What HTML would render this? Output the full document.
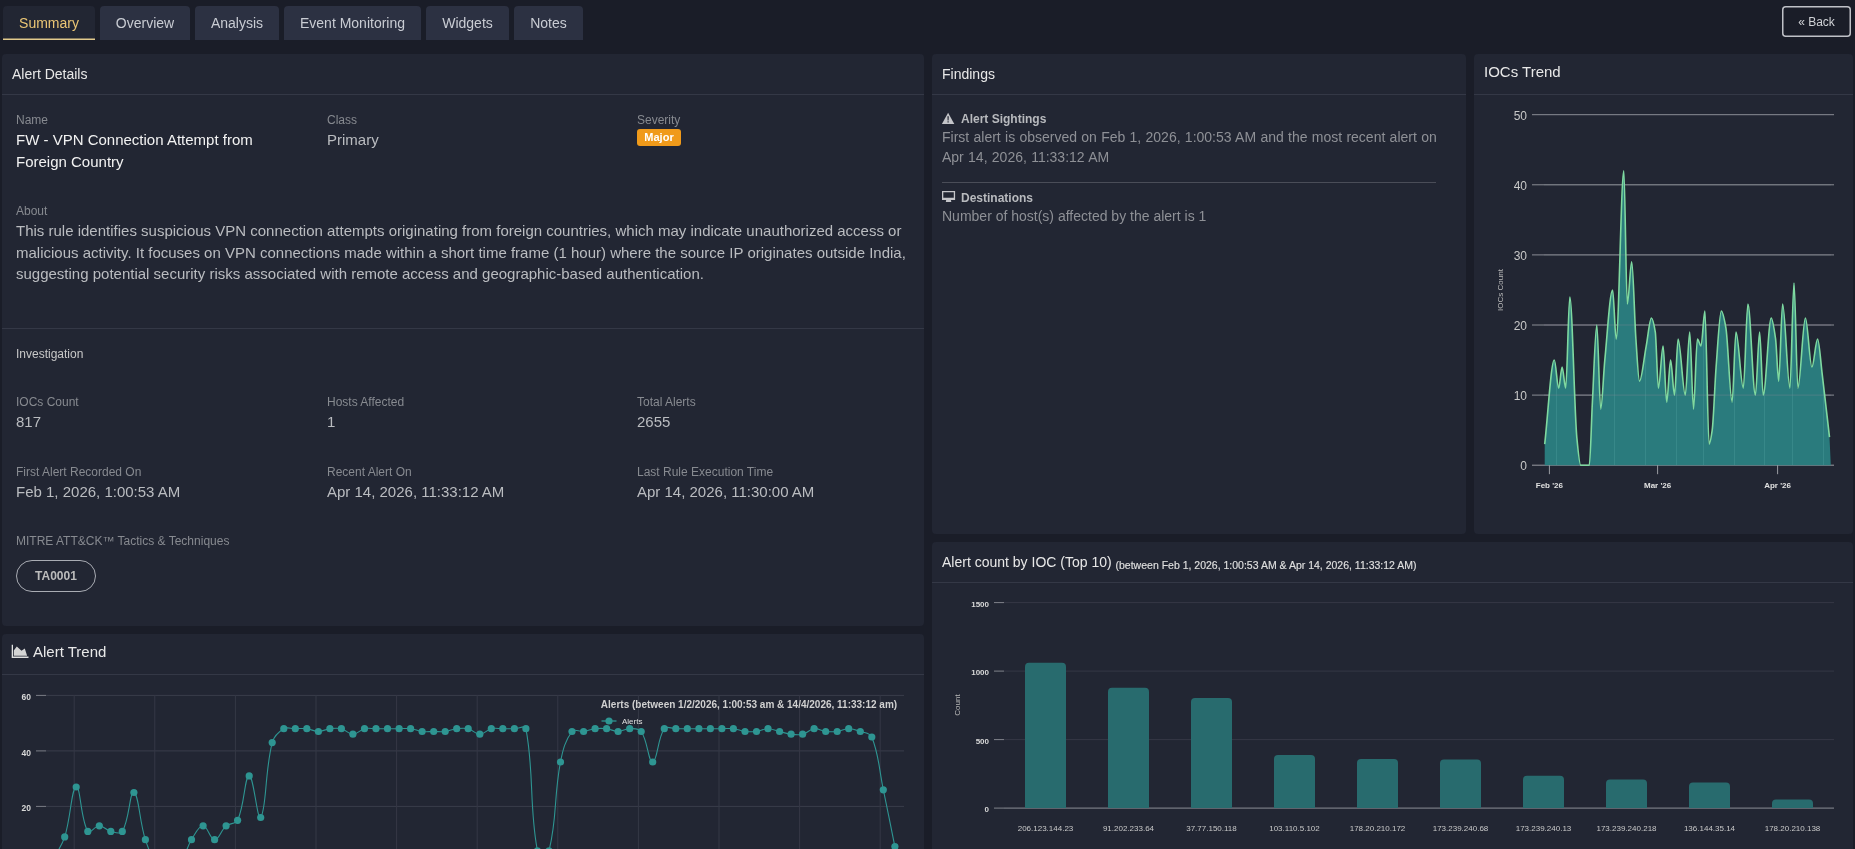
<!DOCTYPE html>
<html><head><meta charset="utf-8"><style>
*{box-sizing:border-box;margin:0;padding:0}
html,body{width:1855px;height:849px;overflow:hidden;background:#1a1d28;font-family:"Liberation Sans",sans-serif;color:#c8c8c8}
.abs{position:absolute}
body>div{will-change:transform}
.tab{position:absolute;top:6px;height:34px;background:#2c3142;border-radius:4px 4px 0 0;color:#c9ccd3;font-size:14px;line-height:34px;text-align:center}
.tab.active{background:#222633;color:#ebc675;line-height:35px}
.panel{position:absolute;background:#222633;border-radius:4px}
.ph{position:absolute;left:0;right:0;top:0;height:41px;border-bottom:1px solid #343846}
.ph span{position:absolute;left:10px;top:12px;font-size:14px;color:#e8e8e8;white-space:nowrap}
.lbl{position:absolute;font-size:12px;color:#878a90;white-space:nowrap}
.val{position:absolute;font-size:15px;color:#babcc0;white-space:nowrap}
svg text{font-family:"Liberation Sans",sans-serif}
</style></head><body>
<div class="tab active" style="left:3px;width:92px">Summary</div>
<svg class="abs" style="left:0;top:30px" width="100" height="15"><line x1="3" y1="9.3" x2="95" y2="9.3" stroke="#e2ca8c" stroke-width="1.6"/></svg>
<div class="tab" style="left:100px;width:90px">Overview</div>
<div class="tab" style="left:195px;width:84px">Analysis</div>
<div class="tab" style="left:284px;width:137px">Event Monitoring</div>
<div class="tab" style="left:426px;width:83px">Widgets</div>
<div class="tab" style="left:514px;width:69px">Notes</div>
<svg class="abs" style="left:1780px;top:4px" width="74" height="36"><rect x="2.75" y="2.75" width="67.5" height="29.5" rx="3" fill="none" stroke="#bfc1c7" stroke-width="1.5"/></svg><div class="abs" style="left:1782px;top:8px;width:69px;height:31px;color:#d0d2d6;font-size:12px;line-height:29px;text-align:center">&laquo; Back</div>

<!-- Alert details -->
<div class="panel" style="left:2px;top:54px;width:922px;height:572px">
  <div class="ph"><span>Alert Details</span></div>
  <div class="lbl" style="left:14px;top:59px">Name</div>
  <div class="val" style="left:14px;top:75px;color:#f2f2f2;line-height:21.6px;white-space:normal;width:290px">FW - VPN Connection Attempt from Foreign Country</div>
  <div class="lbl" style="left:325px;top:59px">Class</div>
  <div class="val" style="left:325px;top:74.5px;line-height:22px">Primary</div>
  <div class="lbl" style="left:635px;top:59px">Severity</div>
  <div class="abs" style="left:635px;top:75px;width:44px;height:17px;background:#f09a1a;border-radius:3px;color:#fff;font-size:11px;font-weight:700;text-align:center;line-height:17px">Major</div>
  <div class="lbl" style="left:14px;top:150px">About</div>
  <div class="val" style="left:14px;top:166px;width:900px;white-space:normal;line-height:21.5px">This rule identifies suspicious VPN connection attempts originating from foreign countries, which may indicate unauthorized access or malicious activity. It focuses on VPN connections made within a short time frame (1 hour) where the source IP originates outside India, suggesting potential security risks associated with remote access and geographic-based authentication.</div>
  <div class="abs" style="left:0;right:0;top:274px;border-top:1px solid #343846"></div>
  <div class="lbl" style="left:14px;top:293px;color:#c8c8c8">Investigation</div>
  <div class="lbl" style="left:14px;top:341px">IOCs Count</div>
  <div class="val" style="left:14px;top:359px">817</div>
  <div class="lbl" style="left:325px;top:341px">Hosts Affected</div>
  <div class="val" style="left:325px;top:359px">1</div>
  <div class="lbl" style="left:635px;top:341px">Total Alerts</div>
  <div class="val" style="left:635px;top:359px">2655</div>
  <div class="lbl" style="left:14px;top:411px">First Alert Recorded On</div>
  <div class="val" style="left:14px;top:429px">Feb 1, 2026, 1:00:53 AM</div>
  <div class="lbl" style="left:325px;top:411px">Recent Alert On</div>
  <div class="val" style="left:325px;top:429px">Apr 14, 2026, 11:33:12 AM</div>
  <div class="lbl" style="left:635px;top:411px">Last Rule Execution Time</div>
  <div class="val" style="left:635px;top:429px">Apr 14, 2026, 11:30:00 AM</div>
  <div class="lbl" style="left:14px;top:480px">MITRE ATT&amp;CK&trade; Tactics &amp; Techniques</div>
  <div class="abs" style="left:14px;top:506px;width:80px;height:32px;border:1px solid #a9acb3;border-radius:16px;font-size:12px;font-weight:700;color:#bcbcbc;text-align:center;line-height:30px">TA0001</div>
</div>

<!-- Alert trend -->
<div class="panel" style="left:2px;top:634px;width:922px;height:260px">
  <div class="ph"><span style="font-size:15px;top:9px;left:31px">Alert Trend</span></div>
  <svg class="abs" style="left:-0.8px;top:0" width="40" height="40"><path d="M10.7,10.8 H12 V22.6 H27.5 V23.9 H10.7 Z" fill="#e0e0e0"/><path d="M12.8,21.8 V16.6 L15.8,12.4 L20.5,16.8 L23.8,14.5 L26.1,21.8 Z" fill="#d4d4d4"/></svg>
</div>

<!-- Findings -->
<div class="panel" style="left:932px;top:54px;width:534px;height:480px">
  <div class="ph"><span>Findings</span></div>
  <div class="abs" style="left:10px;top:57.5px;font-size:12px;font-weight:700;color:#b8babe;white-space:nowrap"><span style="display:inline-block;width:19px"></span>Alert Sightings</div>
  <svg class="abs" style="left:0;top:50px" width="40" height="30"><path d="M16.1,8.7 L22.3,20 H9.9 Z" fill="#c4c5c9"/><path d="M15.4,12.3 H16.8 L16.6,16.6 H15.6 Z M15.5,17.3 H16.7 V18.5 H15.5 Z" fill="#222633"/></svg>
  <div class="abs" style="left:10px;top:73px;width:500px;font-size:14px;line-height:20px;color:#8e9096;word-spacing:0.4px">First alert is observed on Feb 1, 2026, 1:00:53 AM and the most recent alert on Apr 14, 2026, 11:33:12 AM</div>
  <div class="abs" style="left:10px;top:128px;width:494px;border-top:1px solid #4a4d58"></div>
  <div class="abs" style="left:10px;top:136.5px;font-size:12px;font-weight:700;color:#b8babe;white-space:nowrap"><span style="display:inline-block;width:19px"></span>Destinations</div>
  <svg class="abs" style="left:0;top:130px" width="40" height="30"><path d="M10,6.9 H23.1 V16.1 H10 Z M11.3,8.2 V13.7 H21.8 V8.2 Z" fill="#c4c5c9" fill-rule="evenodd"/><path d="M14.2,16 H18.9 L19.3,18.1 H13.8 Z" fill="#c4c5c9"/></svg>
  <div class="abs" style="left:10px;top:152px;width:500px;font-size:14px;line-height:20px;color:#8e9096">Number of host(s) affected by the alert is 1</div>
</div>

<!-- IOCs Trend -->
<div class="panel" style="left:1474px;top:54px;width:379px;height:480px">
  <div class="ph"><span style="font-size:15px;top:9px">IOCs Trend</span></div>
</div>

<!-- Alert count by IOC -->
<div class="panel" style="left:932px;top:542px;width:921px;height:340px">
  <div class="ph"><span>Alert count by IOC (Top 10) <b style="font-size:10.5px;font-weight:400;-webkit-text-stroke:0.15px #dcdcdc;color:#e0e0e0;position:relative;top:2px">(between Feb 1, 2026, 1:00:53 AM &amp; Apr 14, 2026, 11:33:12 AM)</b></span></div>
</div>

<svg class="abs" style="left:0;top:0" width="1855" height="849" viewBox="0 0 1855 849">
<line x1="36" y1="806.4" x2="46" y2="806.4" stroke="#7a7d86" stroke-width="1"/>
<line x1="46" y1="806.4" x2="904" y2="806.4" stroke="#3a3d4a" stroke-width="1"/>
<text x="31" y="811.4" text-anchor="end" font-size="8.5" font-weight="700" fill="#d8d8d8">20</text>
<line x1="36" y1="750.9" x2="46" y2="750.9" stroke="#7a7d86" stroke-width="1"/>
<line x1="46" y1="750.9" x2="904" y2="750.9" stroke="#3a3d4a" stroke-width="1"/>
<text x="31" y="755.9" text-anchor="end" font-size="8.5" font-weight="700" fill="#d8d8d8">40</text>
<line x1="36" y1="695.4" x2="46" y2="695.4" stroke="#7a7d86" stroke-width="1"/>
<line x1="46" y1="695.4" x2="904" y2="695.4" stroke="#3a3d4a" stroke-width="1"/>
<text x="31" y="700.4" text-anchor="end" font-size="8.5" font-weight="700" fill="#d8d8d8">60</text>
<line x1="74.2" y1="695" x2="74.2" y2="849" stroke="#353846" stroke-width="1"/>
<line x1="154.8" y1="695" x2="154.8" y2="849" stroke="#353846" stroke-width="1"/>
<line x1="235.4" y1="695" x2="235.4" y2="849" stroke="#353846" stroke-width="1"/>
<line x1="316.0" y1="695" x2="316.0" y2="849" stroke="#353846" stroke-width="1"/>
<line x1="396.6" y1="695" x2="396.6" y2="849" stroke="#353846" stroke-width="1"/>
<line x1="477.2" y1="695" x2="477.2" y2="849" stroke="#353846" stroke-width="1"/>
<line x1="557.8" y1="695" x2="557.8" y2="849" stroke="#353846" stroke-width="1"/>
<line x1="638.4" y1="695" x2="638.4" y2="849" stroke="#353846" stroke-width="1"/>
<line x1="719.0" y1="695" x2="719.0" y2="849" stroke="#353846" stroke-width="1"/>
<line x1="799.6" y1="695" x2="799.6" y2="849" stroke="#353846" stroke-width="1"/>
<line x1="880.2" y1="695" x2="880.2" y2="849" stroke="#353846" stroke-width="1"/>
<path d="M53.17,859.12 C57.78,850.25 61.68,846.39 64.70,836.92 C70.90,817.53 71.36,788.15 76.23,786.98 C80.59,785.93 80.55,819.22 87.76,831.38 C89.77,834.76 94.68,825.82 99.29,825.82 C103.90,825.82 105.97,830.21 110.82,831.38 C115.19,832.43 120.31,834.82 122.35,831.38 C129.53,819.28 129.68,791.01 133.88,792.52 C138.91,794.34 139.32,821.38 145.41,839.70 C148.55,849.13 150.63,855.82 156.94,861.90 C159.85,864.70 163.86,861.90 168.47,861.90 C173.08,861.90 177.09,864.70 180.00,861.90 C186.31,855.82 186.17,848.08 191.53,839.70 C195.39,833.65 198.45,825.82 203.06,825.82 C207.67,825.82 209.98,839.70 214.59,839.70 C219.20,839.70 220.72,830.37 226.12,825.82 C229.95,822.60 235.64,824.63 237.65,820.27 C244.86,804.65 244.43,776.45 249.18,775.88 C253.65,775.34 257.36,822.33 260.71,817.50 C266.59,809.01 264.79,771.27 272.24,742.57 C274.01,735.75 278.14,732.09 283.77,728.70 C287.37,726.54 290.69,728.70 295.30,728.70 C299.91,728.70 302.28,728.15 306.83,728.70 C311.51,729.26 313.75,731.48 318.36,731.48 C322.97,731.48 325.21,729.26 329.89,728.70 C334.44,728.15 337.05,727.65 341.42,728.70 C346.27,729.87 348.34,734.25 352.95,734.25 C357.56,734.25 359.63,729.87 364.48,728.70 C368.85,727.65 371.40,728.70 376.01,728.70 C380.62,728.70 382.93,728.70 387.54,728.70 C392.15,728.70 394.46,728.70 399.07,728.70 C403.68,728.70 406.05,728.15 410.60,728.70 C415.28,729.26 417.45,730.91 422.13,731.48 C426.68,732.02 429.05,731.48 433.66,731.48 C438.27,731.48 440.64,732.02 445.19,731.48 C449.87,730.91 452.04,729.26 456.72,728.70 C461.27,728.15 463.88,727.65 468.25,728.70 C473.10,729.87 475.17,734.25 479.78,734.25 C484.39,734.25 486.46,729.87 491.31,728.70 C495.68,727.65 498.23,728.70 502.84,728.70 C507.45,728.70 509.76,728.70 514.37,728.70 C518.98,728.70 525.11,724.50 525.90,728.70 C534.33,773.34 529.00,806.16 537.43,850.80 C538.22,855.00 547.91,854.85 548.96,850.80 C557.13,819.33 553.73,796.98 560.49,762.00 C562.95,749.25 565.20,740.50 572.02,731.48 C574.43,728.29 579.00,732.02 583.55,731.48 C588.23,730.91 590.40,729.26 595.08,728.70 C599.63,728.15 602.06,728.15 606.61,728.70 C611.29,729.26 613.53,731.48 618.14,731.48 C622.75,731.48 625.06,728.70 629.67,728.70 C634.28,728.70 638.74,727.92 641.20,731.48 C647.97,741.24 648.30,762.53 652.73,762.00 C657.52,761.42 657.31,738.74 664.26,728.70 C666.53,725.42 671.18,728.70 675.79,728.70 C680.40,728.70 682.71,728.70 687.32,728.70 C691.93,728.70 694.24,728.70 698.85,728.70 C703.46,728.70 705.77,728.70 710.38,728.70 C714.99,728.70 717.30,728.70 721.91,728.70 C726.52,728.70 728.89,728.15 733.44,728.70 C738.12,729.26 740.29,730.91 744.97,731.48 C749.52,732.02 751.95,732.02 756.50,731.48 C761.18,730.91 763.42,728.70 768.03,728.70 C772.64,728.70 774.95,730.37 779.56,731.48 C784.17,732.59 786.41,733.69 791.09,734.25 C795.64,734.80 798.25,735.30 802.62,734.25 C807.47,733.08 809.36,729.28 814.15,728.70 C818.59,728.17 821.00,730.91 825.68,731.48 C830.23,732.02 832.66,732.02 837.21,731.48 C841.89,730.91 844.13,728.70 848.74,728.70 C853.35,728.70 855.83,729.87 860.27,731.48 C865.06,733.20 870.03,732.56 871.80,737.02 C879.26,755.87 878.89,768.62 883.33,789.75 C888.11,812.47 890.25,823.88 894.86,846.64" fill="none" stroke="#2e9592" stroke-width="1.1"/>
<circle cx="53.2" cy="859.1" r="3.6" fill="#2e9592"/>
<circle cx="64.7" cy="836.9" r="3.6" fill="#2e9592"/>
<circle cx="76.2" cy="787.0" r="3.6" fill="#2e9592"/>
<circle cx="87.8" cy="831.4" r="3.6" fill="#2e9592"/>
<circle cx="99.3" cy="825.8" r="3.6" fill="#2e9592"/>
<circle cx="110.8" cy="831.4" r="3.6" fill="#2e9592"/>
<circle cx="122.3" cy="831.4" r="3.6" fill="#2e9592"/>
<circle cx="133.9" cy="792.5" r="3.6" fill="#2e9592"/>
<circle cx="145.4" cy="839.7" r="3.6" fill="#2e9592"/>
<circle cx="156.9" cy="861.9" r="3.6" fill="#2e9592"/>
<circle cx="168.5" cy="861.9" r="3.6" fill="#2e9592"/>
<circle cx="180.0" cy="861.9" r="3.6" fill="#2e9592"/>
<circle cx="191.5" cy="839.7" r="3.6" fill="#2e9592"/>
<circle cx="203.1" cy="825.8" r="3.6" fill="#2e9592"/>
<circle cx="214.6" cy="839.7" r="3.6" fill="#2e9592"/>
<circle cx="226.1" cy="825.8" r="3.6" fill="#2e9592"/>
<circle cx="237.6" cy="820.3" r="3.6" fill="#2e9592"/>
<circle cx="249.2" cy="775.9" r="3.6" fill="#2e9592"/>
<circle cx="260.7" cy="817.5" r="3.6" fill="#2e9592"/>
<circle cx="272.2" cy="742.6" r="3.6" fill="#2e9592"/>
<circle cx="283.8" cy="728.7" r="3.6" fill="#2e9592"/>
<circle cx="295.3" cy="728.7" r="3.6" fill="#2e9592"/>
<circle cx="306.8" cy="728.7" r="3.6" fill="#2e9592"/>
<circle cx="318.4" cy="731.5" r="3.6" fill="#2e9592"/>
<circle cx="329.9" cy="728.7" r="3.6" fill="#2e9592"/>
<circle cx="341.4" cy="728.7" r="3.6" fill="#2e9592"/>
<circle cx="352.9" cy="734.2" r="3.6" fill="#2e9592"/>
<circle cx="364.5" cy="728.7" r="3.6" fill="#2e9592"/>
<circle cx="376.0" cy="728.7" r="3.6" fill="#2e9592"/>
<circle cx="387.5" cy="728.7" r="3.6" fill="#2e9592"/>
<circle cx="399.1" cy="728.7" r="3.6" fill="#2e9592"/>
<circle cx="410.6" cy="728.7" r="3.6" fill="#2e9592"/>
<circle cx="422.1" cy="731.5" r="3.6" fill="#2e9592"/>
<circle cx="433.7" cy="731.5" r="3.6" fill="#2e9592"/>
<circle cx="445.2" cy="731.5" r="3.6" fill="#2e9592"/>
<circle cx="456.7" cy="728.7" r="3.6" fill="#2e9592"/>
<circle cx="468.2" cy="728.7" r="3.6" fill="#2e9592"/>
<circle cx="479.8" cy="734.2" r="3.6" fill="#2e9592"/>
<circle cx="491.3" cy="728.7" r="3.6" fill="#2e9592"/>
<circle cx="502.8" cy="728.7" r="3.6" fill="#2e9592"/>
<circle cx="514.4" cy="728.7" r="3.6" fill="#2e9592"/>
<circle cx="525.9" cy="728.7" r="3.6" fill="#2e9592"/>
<circle cx="537.4" cy="850.8" r="3.6" fill="#2e9592"/>
<circle cx="549.0" cy="850.8" r="3.6" fill="#2e9592"/>
<circle cx="560.5" cy="762.0" r="3.6" fill="#2e9592"/>
<circle cx="572.0" cy="731.5" r="3.6" fill="#2e9592"/>
<circle cx="583.6" cy="731.5" r="3.6" fill="#2e9592"/>
<circle cx="595.1" cy="728.7" r="3.6" fill="#2e9592"/>
<circle cx="606.6" cy="728.7" r="3.6" fill="#2e9592"/>
<circle cx="618.1" cy="731.5" r="3.6" fill="#2e9592"/>
<circle cx="629.7" cy="728.7" r="3.6" fill="#2e9592"/>
<circle cx="641.2" cy="731.5" r="3.6" fill="#2e9592"/>
<circle cx="652.7" cy="762.0" r="3.6" fill="#2e9592"/>
<circle cx="664.3" cy="728.7" r="3.6" fill="#2e9592"/>
<circle cx="675.8" cy="728.7" r="3.6" fill="#2e9592"/>
<circle cx="687.3" cy="728.7" r="3.6" fill="#2e9592"/>
<circle cx="698.9" cy="728.7" r="3.6" fill="#2e9592"/>
<circle cx="710.4" cy="728.7" r="3.6" fill="#2e9592"/>
<circle cx="721.9" cy="728.7" r="3.6" fill="#2e9592"/>
<circle cx="733.4" cy="728.7" r="3.6" fill="#2e9592"/>
<circle cx="745.0" cy="731.5" r="3.6" fill="#2e9592"/>
<circle cx="756.5" cy="731.5" r="3.6" fill="#2e9592"/>
<circle cx="768.0" cy="728.7" r="3.6" fill="#2e9592"/>
<circle cx="779.6" cy="731.5" r="3.6" fill="#2e9592"/>
<circle cx="791.1" cy="734.2" r="3.6" fill="#2e9592"/>
<circle cx="802.6" cy="734.2" r="3.6" fill="#2e9592"/>
<circle cx="814.1" cy="728.7" r="3.6" fill="#2e9592"/>
<circle cx="825.7" cy="731.5" r="3.6" fill="#2e9592"/>
<circle cx="837.2" cy="731.5" r="3.6" fill="#2e9592"/>
<circle cx="848.7" cy="728.7" r="3.6" fill="#2e9592"/>
<circle cx="860.3" cy="731.5" r="3.6" fill="#2e9592"/>
<circle cx="871.8" cy="737.0" r="3.6" fill="#2e9592"/>
<circle cx="883.3" cy="789.8" r="3.6" fill="#2e9592"/>
<circle cx="894.9" cy="846.6" r="3.6" fill="#2e9592"/>
<text x="749" y="708" text-anchor="middle" font-size="10" font-weight="700" fill="#d0d0d0">Alerts (between 1/2/2026, 1:00:53 am &amp; 14/4/2026, 11:33:12 am)</text>
<line x1="601.5" y1="721" x2="616.5" y2="721" stroke="#2e9592" stroke-width="1.3"/>
<circle cx="609" cy="721" r="3.6" fill="#2e9592"/>
<text x="622" y="724" font-size="8" fill="#e0e0e0">Alerts</text>
<line x1="1532" y1="465.2" x2="1834" y2="465.2" stroke="#9a9ca3" stroke-width="1"/>
<text x="1527" y="470.2" text-anchor="end" font-size="12" fill="#c8c8c8">0</text>
<line x1="1532" y1="395.1" x2="1834" y2="395.1" stroke="#8a8d95" stroke-width="1"/>
<text x="1527" y="400.1" text-anchor="end" font-size="12" fill="#c8c8c8">10</text>
<line x1="1532" y1="325.0" x2="1834" y2="325.0" stroke="#8a8d95" stroke-width="1"/>
<text x="1527" y="330.0" text-anchor="end" font-size="12" fill="#c8c8c8">20</text>
<line x1="1532" y1="254.9" x2="1834" y2="254.9" stroke="#8a8d95" stroke-width="1"/>
<text x="1527" y="259.9" text-anchor="end" font-size="12" fill="#c8c8c8">30</text>
<line x1="1532" y1="184.8" x2="1834" y2="184.8" stroke="#8a8d95" stroke-width="1"/>
<text x="1527" y="189.8" text-anchor="end" font-size="12" fill="#c8c8c8">40</text>
<line x1="1532" y1="114.7" x2="1834" y2="114.7" stroke="#8a8d95" stroke-width="1"/>
<text x="1527" y="119.7" text-anchor="end" font-size="12" fill="#c8c8c8">50</text>
<clipPath id="iocclip"><path d="M1544.7,444.2 C1547.90,416.13 1551.10,360.05 1554.30,360.05 C1555.77,360.05 1557.23,388.09 1558.70,388.09 C1559.83,388.09 1560.97,367.06 1562.10,367.06 C1563.30,367.06 1564.50,388.09 1565.70,388.09 C1567.07,388.09 1568.43,296.96 1569.80,296.96 C1572.13,296.96 1574.47,412.47 1576.80,437.16 C1578.10,450.92 1579.40,465.20 1580.70,465.20 C1583.57,465.20 1586.43,465.20 1589.30,465.20 C1590.33,465.20 1591.37,421.57 1592.40,402.11 C1593.87,374.49 1595.33,325.00 1596.80,325.00 C1598.10,325.00 1599.40,409.12 1600.70,409.12 C1602.07,409.12 1603.43,374.08 1604.80,360.05 C1607.40,333.36 1610.00,289.95 1612.60,289.95 C1613.80,289.95 1615.00,339.02 1616.20,339.02 C1618.73,339.02 1621.27,170.78 1623.80,170.78 C1624.97,170.78 1626.13,303.97 1627.30,303.97 C1628.77,303.97 1630.23,261.91 1631.70,261.91 C1633.10,261.91 1634.50,319.03 1635.90,339.02 C1637.10,356.16 1638.30,381.08 1639.50,381.08 C1641.73,381.08 1643.97,357.89 1646.20,346.03 C1647.93,336.82 1649.67,317.99 1651.40,317.99 C1652.70,317.99 1654.00,324.21 1655.30,332.01 C1656.33,338.21 1657.37,388.09 1658.40,388.09 C1659.97,388.09 1661.53,346.03 1663.10,346.03 C1664.30,346.03 1665.50,402.11 1666.70,402.11 C1668.00,402.11 1669.30,360.05 1670.60,360.05 C1671.90,360.05 1673.20,395.10 1674.50,395.10 C1675.70,395.10 1676.90,339.02 1678.10,339.02 C1680.50,339.02 1682.90,395.10 1685.30,395.10 C1686.77,395.10 1688.23,332.01 1689.70,332.01 C1690.97,332.01 1692.23,409.12 1693.50,409.12 C1694.80,409.12 1696.10,339.02 1697.40,339.02 C1698.60,339.02 1699.80,346.03 1701.00,346.03 C1702.30,346.03 1703.60,310.98 1704.90,310.98 C1706.30,310.98 1707.70,444.17 1709.10,444.17 C1710.13,444.17 1711.17,437.45 1712.20,430.15 C1713.50,420.96 1714.80,383.88 1716.10,367.06 C1717.83,344.63 1719.57,310.98 1721.30,310.98 C1722.83,310.98 1724.37,319.21 1725.90,327.80 C1727.97,339.39 1730.03,402.11 1732.10,402.11 C1733.40,402.11 1734.70,332.01 1736.00,332.01 C1738.43,332.01 1740.87,388.09 1743.30,388.09 C1744.83,388.09 1746.37,303.97 1747.90,303.97 C1750.40,303.97 1752.90,395.10 1755.40,395.10 C1756.80,395.10 1758.20,332.01 1759.60,332.01 C1760.80,332.01 1762.00,395.10 1763.20,395.10 C1765.87,395.10 1768.53,317.99 1771.20,317.99 C1772.67,317.99 1774.13,328.65 1775.60,339.02 C1776.63,346.32 1777.67,381.08 1778.70,381.08 C1780.00,381.08 1781.30,303.97 1782.60,303.97 C1785.03,303.97 1787.47,388.09 1789.90,388.09 C1791.27,388.09 1792.63,282.94 1794.00,282.94 C1795.30,282.94 1796.60,388.09 1797.90,388.09 C1800.40,388.09 1802.90,317.99 1805.40,317.99 C1807.57,317.99 1809.73,367.06 1811.90,367.06 C1813.80,367.06 1815.70,339.02 1817.60,339.02 C1819.13,339.02 1820.67,361.65 1822.20,374.07 C1824.63,393.78 1827.07,416.13 1829.50,437.16 L1830.8,465.2 L1544.7,465.2 Z"/></clipPath>
<path d="M1544.7,444.2 C1547.90,416.13 1551.10,360.05 1554.30,360.05 C1555.77,360.05 1557.23,388.09 1558.70,388.09 C1559.83,388.09 1560.97,367.06 1562.10,367.06 C1563.30,367.06 1564.50,388.09 1565.70,388.09 C1567.07,388.09 1568.43,296.96 1569.80,296.96 C1572.13,296.96 1574.47,412.47 1576.80,437.16 C1578.10,450.92 1579.40,465.20 1580.70,465.20 C1583.57,465.20 1586.43,465.20 1589.30,465.20 C1590.33,465.20 1591.37,421.57 1592.40,402.11 C1593.87,374.49 1595.33,325.00 1596.80,325.00 C1598.10,325.00 1599.40,409.12 1600.70,409.12 C1602.07,409.12 1603.43,374.08 1604.80,360.05 C1607.40,333.36 1610.00,289.95 1612.60,289.95 C1613.80,289.95 1615.00,339.02 1616.20,339.02 C1618.73,339.02 1621.27,170.78 1623.80,170.78 C1624.97,170.78 1626.13,303.97 1627.30,303.97 C1628.77,303.97 1630.23,261.91 1631.70,261.91 C1633.10,261.91 1634.50,319.03 1635.90,339.02 C1637.10,356.16 1638.30,381.08 1639.50,381.08 C1641.73,381.08 1643.97,357.89 1646.20,346.03 C1647.93,336.82 1649.67,317.99 1651.40,317.99 C1652.70,317.99 1654.00,324.21 1655.30,332.01 C1656.33,338.21 1657.37,388.09 1658.40,388.09 C1659.97,388.09 1661.53,346.03 1663.10,346.03 C1664.30,346.03 1665.50,402.11 1666.70,402.11 C1668.00,402.11 1669.30,360.05 1670.60,360.05 C1671.90,360.05 1673.20,395.10 1674.50,395.10 C1675.70,395.10 1676.90,339.02 1678.10,339.02 C1680.50,339.02 1682.90,395.10 1685.30,395.10 C1686.77,395.10 1688.23,332.01 1689.70,332.01 C1690.97,332.01 1692.23,409.12 1693.50,409.12 C1694.80,409.12 1696.10,339.02 1697.40,339.02 C1698.60,339.02 1699.80,346.03 1701.00,346.03 C1702.30,346.03 1703.60,310.98 1704.90,310.98 C1706.30,310.98 1707.70,444.17 1709.10,444.17 C1710.13,444.17 1711.17,437.45 1712.20,430.15 C1713.50,420.96 1714.80,383.88 1716.10,367.06 C1717.83,344.63 1719.57,310.98 1721.30,310.98 C1722.83,310.98 1724.37,319.21 1725.90,327.80 C1727.97,339.39 1730.03,402.11 1732.10,402.11 C1733.40,402.11 1734.70,332.01 1736.00,332.01 C1738.43,332.01 1740.87,388.09 1743.30,388.09 C1744.83,388.09 1746.37,303.97 1747.90,303.97 C1750.40,303.97 1752.90,395.10 1755.40,395.10 C1756.80,395.10 1758.20,332.01 1759.60,332.01 C1760.80,332.01 1762.00,395.10 1763.20,395.10 C1765.87,395.10 1768.53,317.99 1771.20,317.99 C1772.67,317.99 1774.13,328.65 1775.60,339.02 C1776.63,346.32 1777.67,381.08 1778.70,381.08 C1780.00,381.08 1781.30,303.97 1782.60,303.97 C1785.03,303.97 1787.47,388.09 1789.90,388.09 C1791.27,388.09 1792.63,282.94 1794.00,282.94 C1795.30,282.94 1796.60,388.09 1797.90,388.09 C1800.40,388.09 1802.90,317.99 1805.40,317.99 C1807.57,317.99 1809.73,367.06 1811.90,367.06 C1813.80,367.06 1815.70,339.02 1817.60,339.02 C1819.13,339.02 1820.67,361.65 1822.20,374.07 C1824.63,393.78 1827.07,416.13 1829.50,437.16 L1830.8,465.2 L1544.7,465.2 Z" fill="#2a7b7d"/>
<g clip-path="url(#iocclip)"><line x1="1556.5" y1="150" x2="1556.5" y2="465.2" stroke="#5fb0b0" stroke-opacity="0.25" stroke-width="1"/><line x1="1614.5" y1="150" x2="1614.5" y2="465.2" stroke="#5fb0b0" stroke-opacity="0.25" stroke-width="1"/><line x1="1645.5" y1="150" x2="1645.5" y2="465.2" stroke="#5fb0b0" stroke-opacity="0.25" stroke-width="1"/><line x1="1676.5" y1="150" x2="1676.5" y2="465.2" stroke="#5fb0b0" stroke-opacity="0.25" stroke-width="1"/><line x1="1703.5" y1="150" x2="1703.5" y2="465.2" stroke="#5fb0b0" stroke-opacity="0.25" stroke-width="1"/><line x1="1734.5" y1="150" x2="1734.5" y2="465.2" stroke="#5fb0b0" stroke-opacity="0.25" stroke-width="1"/><line x1="1764.5" y1="150" x2="1764.5" y2="465.2" stroke="#5fb0b0" stroke-opacity="0.25" stroke-width="1"/><line x1="1792.5" y1="150" x2="1792.5" y2="465.2" stroke="#5fb0b0" stroke-opacity="0.25" stroke-width="1"/><line x1="1823.5" y1="150" x2="1823.5" y2="465.2" stroke="#5fb0b0" stroke-opacity="0.25" stroke-width="1"/></g>
<line x1="1544" y1="395.1" x2="1831" y2="395.1" stroke="#8a8d95" stroke-opacity="0.35" stroke-width="1"/>
<line x1="1544" y1="325.0" x2="1831" y2="325.0" stroke="#8a8d95" stroke-opacity="0.35" stroke-width="1"/>
<line x1="1544" y1="254.9" x2="1831" y2="254.9" stroke="#8a8d95" stroke-opacity="0.35" stroke-width="1"/>
<line x1="1544" y1="184.8" x2="1831" y2="184.8" stroke="#8a8d95" stroke-opacity="0.35" stroke-width="1"/>
<path d="M1544.7,444.2 C1547.90,416.13 1551.10,360.05 1554.30,360.05 C1555.77,360.05 1557.23,388.09 1558.70,388.09 C1559.83,388.09 1560.97,367.06 1562.10,367.06 C1563.30,367.06 1564.50,388.09 1565.70,388.09 C1567.07,388.09 1568.43,296.96 1569.80,296.96 C1572.13,296.96 1574.47,412.47 1576.80,437.16 C1578.10,450.92 1579.40,465.20 1580.70,465.20 C1583.57,465.20 1586.43,465.20 1589.30,465.20 C1590.33,465.20 1591.37,421.57 1592.40,402.11 C1593.87,374.49 1595.33,325.00 1596.80,325.00 C1598.10,325.00 1599.40,409.12 1600.70,409.12 C1602.07,409.12 1603.43,374.08 1604.80,360.05 C1607.40,333.36 1610.00,289.95 1612.60,289.95 C1613.80,289.95 1615.00,339.02 1616.20,339.02 C1618.73,339.02 1621.27,170.78 1623.80,170.78 C1624.97,170.78 1626.13,303.97 1627.30,303.97 C1628.77,303.97 1630.23,261.91 1631.70,261.91 C1633.10,261.91 1634.50,319.03 1635.90,339.02 C1637.10,356.16 1638.30,381.08 1639.50,381.08 C1641.73,381.08 1643.97,357.89 1646.20,346.03 C1647.93,336.82 1649.67,317.99 1651.40,317.99 C1652.70,317.99 1654.00,324.21 1655.30,332.01 C1656.33,338.21 1657.37,388.09 1658.40,388.09 C1659.97,388.09 1661.53,346.03 1663.10,346.03 C1664.30,346.03 1665.50,402.11 1666.70,402.11 C1668.00,402.11 1669.30,360.05 1670.60,360.05 C1671.90,360.05 1673.20,395.10 1674.50,395.10 C1675.70,395.10 1676.90,339.02 1678.10,339.02 C1680.50,339.02 1682.90,395.10 1685.30,395.10 C1686.77,395.10 1688.23,332.01 1689.70,332.01 C1690.97,332.01 1692.23,409.12 1693.50,409.12 C1694.80,409.12 1696.10,339.02 1697.40,339.02 C1698.60,339.02 1699.80,346.03 1701.00,346.03 C1702.30,346.03 1703.60,310.98 1704.90,310.98 C1706.30,310.98 1707.70,444.17 1709.10,444.17 C1710.13,444.17 1711.17,437.45 1712.20,430.15 C1713.50,420.96 1714.80,383.88 1716.10,367.06 C1717.83,344.63 1719.57,310.98 1721.30,310.98 C1722.83,310.98 1724.37,319.21 1725.90,327.80 C1727.97,339.39 1730.03,402.11 1732.10,402.11 C1733.40,402.11 1734.70,332.01 1736.00,332.01 C1738.43,332.01 1740.87,388.09 1743.30,388.09 C1744.83,388.09 1746.37,303.97 1747.90,303.97 C1750.40,303.97 1752.90,395.10 1755.40,395.10 C1756.80,395.10 1758.20,332.01 1759.60,332.01 C1760.80,332.01 1762.00,395.10 1763.20,395.10 C1765.87,395.10 1768.53,317.99 1771.20,317.99 C1772.67,317.99 1774.13,328.65 1775.60,339.02 C1776.63,346.32 1777.67,381.08 1778.70,381.08 C1780.00,381.08 1781.30,303.97 1782.60,303.97 C1785.03,303.97 1787.47,388.09 1789.90,388.09 C1791.27,388.09 1792.63,282.94 1794.00,282.94 C1795.30,282.94 1796.60,388.09 1797.90,388.09 C1800.40,388.09 1802.90,317.99 1805.40,317.99 C1807.57,317.99 1809.73,367.06 1811.90,367.06 C1813.80,367.06 1815.70,339.02 1817.60,339.02 C1819.13,339.02 1820.67,361.65 1822.20,374.07 C1824.63,393.78 1827.07,416.13 1829.50,437.16" fill="none" stroke="#7fd9a0" stroke-width="1.6"/>
<line x1="1549.4" y1="465.2" x2="1549.4" y2="474.2" stroke="#9a9ca3" stroke-width="1"/>
<text x="1549.4" y="488.2" text-anchor="middle" font-size="8" font-weight="700" fill="#e0e0e0">Feb '26</text>
<line x1="1657.6" y1="465.2" x2="1657.6" y2="474.2" stroke="#9a9ca3" stroke-width="1"/>
<text x="1657.6" y="488.2" text-anchor="middle" font-size="8" font-weight="700" fill="#e0e0e0">Mar '26</text>
<line x1="1777.6" y1="465.2" x2="1777.6" y2="474.2" stroke="#9a9ca3" stroke-width="1"/>
<text x="1777.6" y="488.2" text-anchor="middle" font-size="8" font-weight="700" fill="#e0e0e0">Apr '26</text>
<text transform="translate(1503,290) rotate(-90)" text-anchor="middle" font-size="8" fill="#b8b8b8">IOCs Count</text>
<line x1="994" y1="808.1" x2="1004" y2="808.1" stroke="#80838c" stroke-width="1"/>
<line x1="1004" y1="808.1" x2="1834" y2="808.1" stroke="#8a8d95" stroke-width="1"/>
<text x="989" y="812.1" text-anchor="end" font-size="8" font-weight="700" fill="#d8d8d8">0</text>
<line x1="994" y1="739.6" x2="1004" y2="739.6" stroke="#80838c" stroke-width="1"/>
<line x1="1004" y1="739.6" x2="1834" y2="739.6" stroke="#353846" stroke-width="1"/>
<text x="989" y="743.6" text-anchor="end" font-size="8" font-weight="700" fill="#d8d8d8">500</text>
<line x1="994" y1="671.1" x2="1004" y2="671.1" stroke="#80838c" stroke-width="1"/>
<line x1="1004" y1="671.1" x2="1834" y2="671.1" stroke="#353846" stroke-width="1"/>
<text x="989" y="675.1" text-anchor="end" font-size="8" font-weight="700" fill="#d8d8d8">1000</text>
<line x1="994" y1="602.6" x2="1004" y2="602.6" stroke="#80838c" stroke-width="1"/>
<line x1="1004" y1="602.6" x2="1834" y2="602.6" stroke="#353846" stroke-width="1"/>
<text x="989" y="606.6" text-anchor="end" font-size="8" font-weight="700" fill="#d8d8d8">1500</text>
<path d="M1025,808.1 L1025,666.7 Q1025,662.7 1029,662.7 L1062,662.7 Q1066,662.7 1066,666.7 L1066,808.1 Z" fill="#286b6e"/>
<text x="1045.5" y="831" text-anchor="middle" font-size="8" fill="#c8c8c8">206.123.144.23</text>
<path d="M1108,808.1 L1108,691.8 Q1108,687.8 1112,687.8 L1145,687.8 Q1149,687.8 1149,691.8 L1149,808.1 Z" fill="#286b6e"/>
<text x="1128.5" y="831" text-anchor="middle" font-size="8" fill="#c8c8c8">91.202.233.64</text>
<path d="M1191,808.1 L1191,702.0 Q1191,698.0 1195,698.0 L1228,698.0 Q1232,698.0 1232,702.0 L1232,808.1 Z" fill="#286b6e"/>
<text x="1211.5" y="831" text-anchor="middle" font-size="8" fill="#c8c8c8">37.77.150.118</text>
<path d="M1274,808.1 L1274,759.1 Q1274,755.1 1278,755.1 L1311,755.1 Q1315,755.1 1315,759.1 L1315,808.1 Z" fill="#286b6e"/>
<text x="1294.5" y="831" text-anchor="middle" font-size="8" fill="#c8c8c8">103.110.5.102</text>
<path d="M1357,808.1 L1357,762.9 Q1357,758.9 1361,758.9 L1394,758.9 Q1398,758.9 1398,762.9 L1398,808.1 Z" fill="#286b6e"/>
<text x="1377.5" y="831" text-anchor="middle" font-size="8" fill="#c8c8c8">178.20.210.172</text>
<path d="M1440,808.1 L1440,763.6 Q1440,759.6 1444,759.6 L1477,759.6 Q1481,759.6 1481,763.6 L1481,808.1 Z" fill="#286b6e"/>
<text x="1460.5" y="831" text-anchor="middle" font-size="8" fill="#c8c8c8">173.239.240.68</text>
<path d="M1523,808.1 L1523,779.8 Q1523,775.8 1527,775.8 L1560,775.8 Q1564,775.8 1564,779.8 L1564,808.1 Z" fill="#286b6e"/>
<text x="1543.5" y="831" text-anchor="middle" font-size="8" fill="#c8c8c8">173.239.240.13</text>
<path d="M1606,808.1 L1606,783.5 Q1606,779.5 1610,779.5 L1643,779.5 Q1647,779.5 1647,783.5 L1647,808.1 Z" fill="#286b6e"/>
<text x="1626.5" y="831" text-anchor="middle" font-size="8" fill="#c8c8c8">173.239.240.218</text>
<path d="M1689,808.1 L1689,786.5 Q1689,782.5 1693,782.5 L1726,782.5 Q1730,782.5 1730,786.5 L1730,808.1 Z" fill="#286b6e"/>
<text x="1709.5" y="831" text-anchor="middle" font-size="8" fill="#c8c8c8">136.144.35.14</text>
<path d="M1772,808.1 L1772,803.4 Q1772,799.4 1776,799.4 L1809,799.4 Q1813,799.4 1813,803.4 L1813,808.1 Z" fill="#286b6e"/>
<text x="1792.5" y="831" text-anchor="middle" font-size="8" fill="#c8c8c8">178.20.210.138</text>
<text transform="translate(960,705) rotate(-90)" text-anchor="middle" font-size="8" fill="#b8b8b8">Count</text>
</svg>
</body></html>
